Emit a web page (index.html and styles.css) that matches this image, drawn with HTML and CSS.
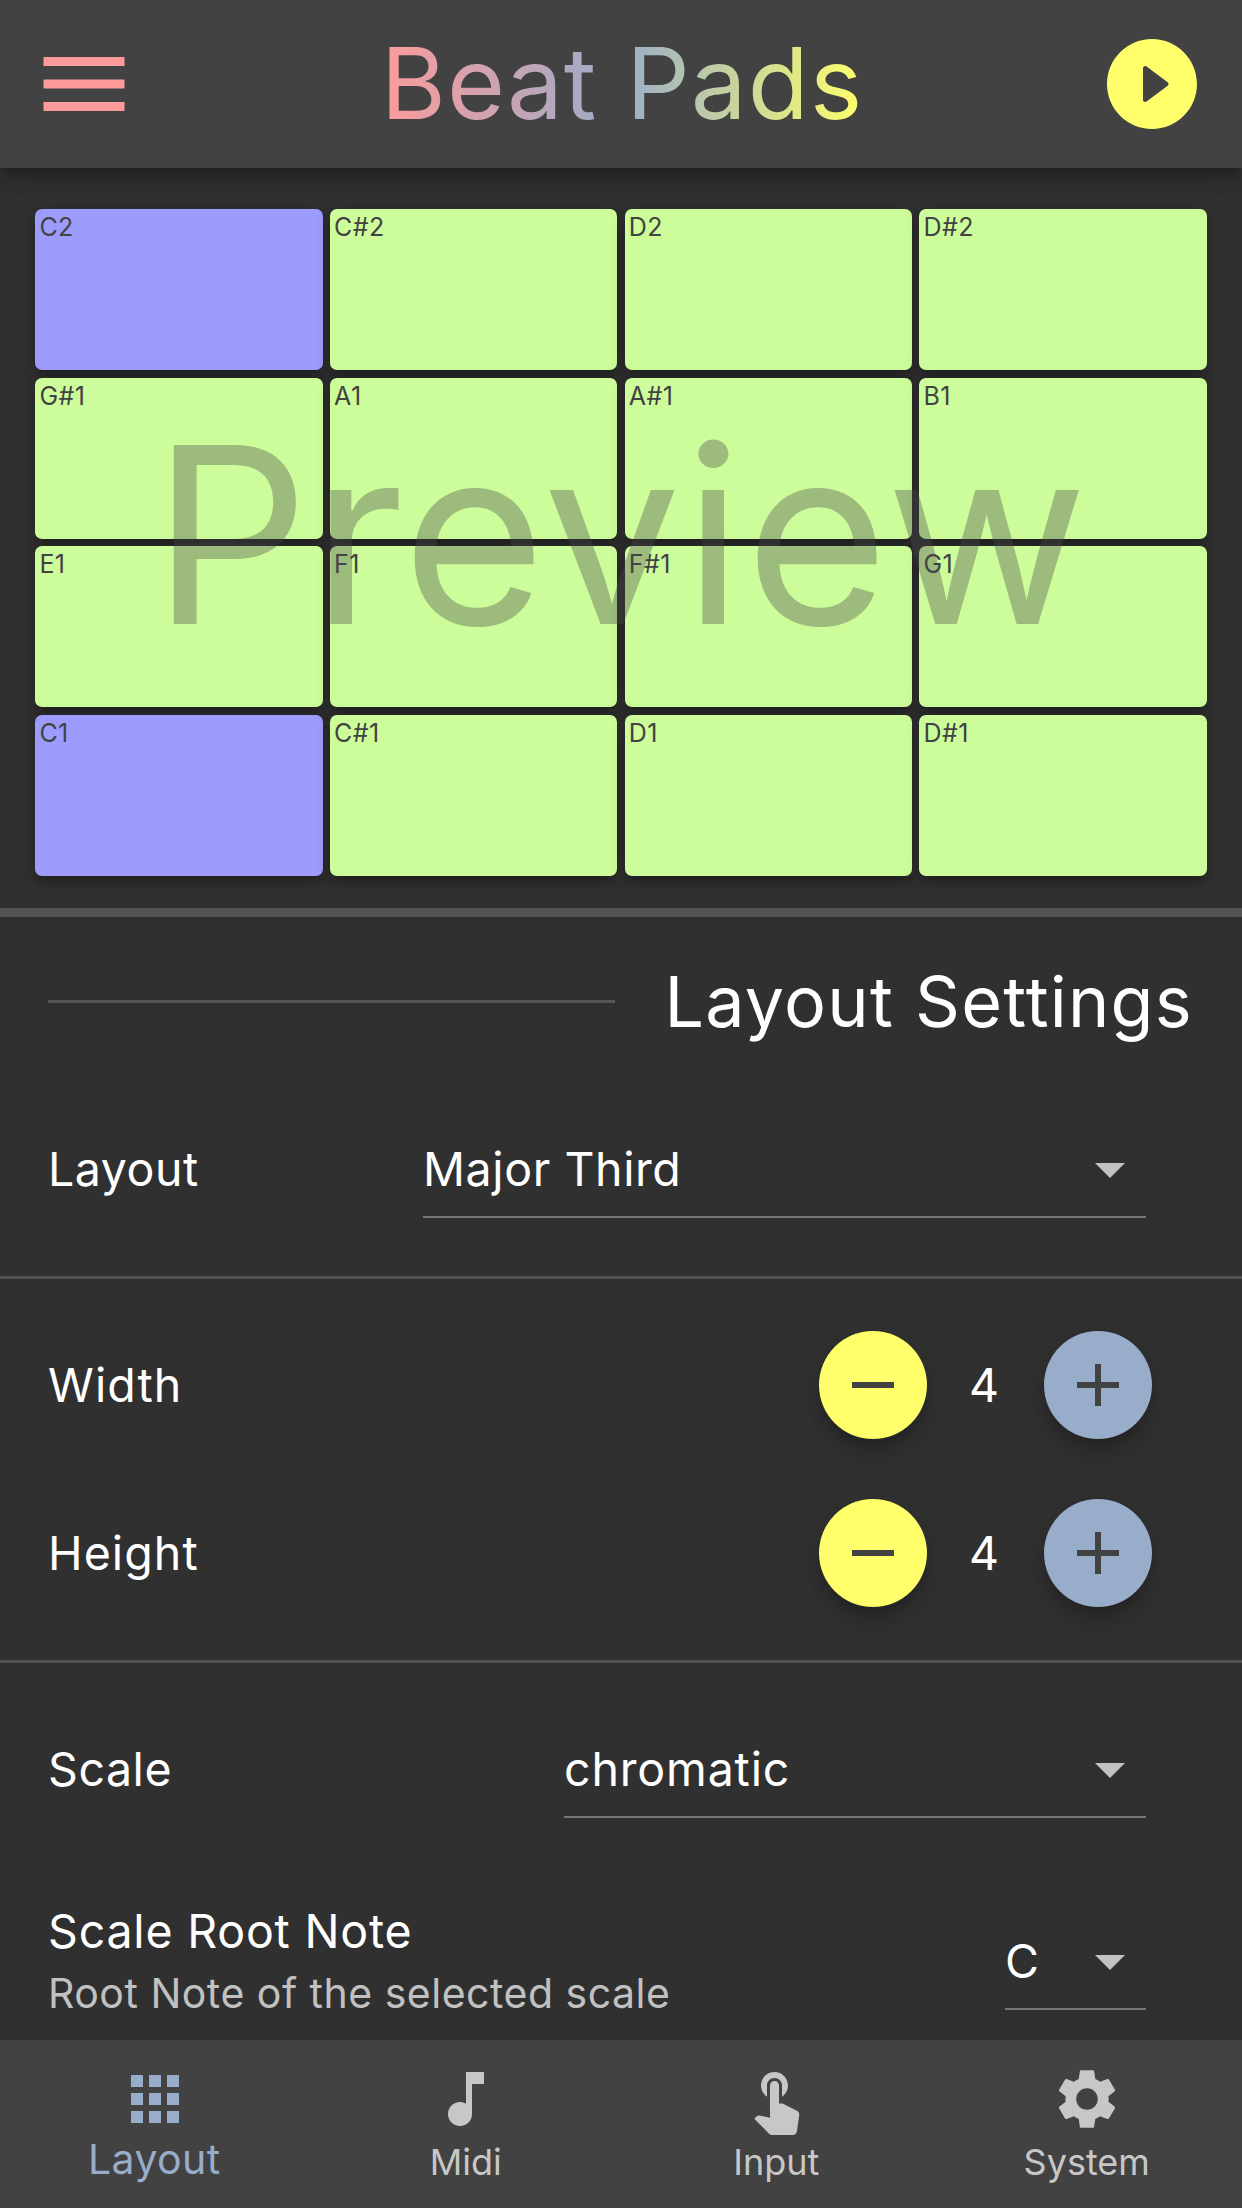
FILE: index.html
```html
<!DOCTYPE html>
<html lang="en">
<head>
<meta charset="utf-8">
<title>Beat Pads</title>
<link rel="stylesheet" href="styles.css">
</head>
<body>
<div class="app">
  <header class="app-bar">
    <svg class="bar-icon menu" viewBox="0 0 24 24"><path d="M3 18h18v-2H3v2zm0-5h18v-2H3v2zm0-7v2h18V6H3z"/></svg>
    <h1 class="title">Beat Pads</h1>
    <svg class="bar-icon play" viewBox="0 0 24 24"><path d="M12 2C6.48 2 2 6.48 2 12s4.48 10 10 10 10-4.48 10-10S17.52 2 12 2zm-2 13.5v-7c0-.41.47-.65.8-.4l4.67 3.5c.27.2.27.6 0 .8l-4.67 3.5c-.33.25-.8.01-.8-.4z"/></svg>
  </header>

  <section class="preview">
    <div class="pads">
      <div class="pad root">C2</div><div class="pad">C#2</div><div class="pad">D2</div><div class="pad">D#2</div>
      <div class="pad">G#1</div><div class="pad">A1</div><div class="pad">A#1</div><div class="pad">B1</div>
      <div class="pad">E1</div><div class="pad">F1</div><div class="pad">F#1</div><div class="pad">G1</div>
      <div class="pad root">C1</div><div class="pad">C#1</div><div class="pad">D1</div><div class="pad">D#1</div>
    </div>
    <div class="watermark">Preview</div>
  </section>

  <main class="settings">
    <div class="heading">
      <span class="heading-line"></span>
      <h2 class="heading-text">Layout Settings</h2>
    </div>

    <div class="row">
      <span class="label label-layout">Layout</span>
      <div class="dropdown wide">
        <span class="value">Major Third</span>
        <svg class="arrow" viewBox="0 0 24 24"><path d="M7 10l5 5 5-5z"/></svg>
      </div>
    </div>
    <hr class="divider">

    <div class="row">
      <span class="label label-size">Width</span>
      <div class="stepper">
        <span class="round minus"><svg viewBox="0 0 24 24"><path d="M19 13H5v-2h14v2z"/></svg></span>
        <span class="count">4</span>
        <span class="round plus"><svg viewBox="0 0 24 24"><path d="M19 13h-6v6h-2v-6H5v-2h6V5h2v6h6v2z"/></svg></span>
      </div>
    </div>
    <div class="row">
      <span class="label label-size">Height</span>
      <div class="stepper">
        <span class="round minus"><svg viewBox="0 0 24 24"><path d="M19 13H5v-2h14v2z"/></svg></span>
        <span class="count">4</span>
        <span class="round plus"><svg viewBox="0 0 24 24"><path d="M19 13h-6v6h-2v-6H5v-2h6V5h2v6h6v2z"/></svg></span>
      </div>
    </div>
    <hr class="divider">

    <div class="row">
      <span class="label label-layout">Scale</span>
      <div class="dropdown medium">
        <span class="value value-scale">chromatic</span>
        <svg class="arrow" viewBox="0 0 24 24"><path d="M7 10l5 5 5-5z"/></svg>
      </div>
    </div>
    <div class="row tall">
      <div class="two-line">
        <div class="label">Scale Root Note</div>
        <div class="sub">Root Note of the selected scale</div>
      </div>
      <div class="dropdown narrow">
        <span class="value">C</span>
        <svg class="arrow" viewBox="0 0 24 24"><path d="M7 10l5 5 5-5z"/></svg>
      </div>
    </div>
  </main>

  <nav class="nav">
    <div class="tab active">
      <svg viewBox="0 0 24 24"><path d="M4 8h4V4H4v4zm6 12h4v-4h-4v4zm-6 0h4v-4H4v4zm0-6h4v-4H4v4zm6 0h4v-4h-4v4zm6-10v4h4V4h-4zm-6 4h4V4h-4v4zm6 6h4v-4h-4v4zm0 6h4v-4h-4v4z"/></svg>
      <span>Layout</span>
    </div>
    <div class="tab">
      <svg viewBox="0 0 24 24"><path d="M12 3v10.55c-.59-.34-1.27-.55-2-.55-2.21 0-4 1.79-4 4s1.79 4 4 4 4-1.79 4-4V7h4V3h-6z"/></svg>
      <span>Midi</span>
    </div>
    <div class="tab">
      <svg viewBox="0 0 24 24"><path d="M9 11.24V7.5C9 6.12 10.12 5 11.5 5S14 6.12 14 7.5v3.74c1.21-.81 2-2.18 2-3.74C16 5.01 13.99 3 11.5 3S7 5.01 7 7.5c0 1.56.79 2.93 2 3.74zm9.84 4.63l-4.54-2.26c-.17-.07-.35-.11-.54-.11H13v-6c0-.83-.67-1.5-1.5-1.5S10 6.67 10 7.5v10.74l-3.43-.72c-.08-.01-.15-.03-.24-.03-.31 0-.59.13-.79.33l-.79.8 4.94 4.94c.27.27.65.44 1.06.44h6.79c.75 0 1.33-.55 1.44-1.28l.75-5.27c.01-.07.02-.14.02-.2 0-.62-.38-1.16-.91-1.38z"/></svg>
      <span>Input</span>
    </div>
    <div class="tab">
      <svg viewBox="0 0 24 24"><path d="M19.14 12.94c.04-.3.06-.61.06-.94 0-.32-.02-.64-.07-.94l2.03-1.58c.18-.14.23-.41.12-.61l-1.92-3.32c-.12-.22-.37-.29-.59-.22l-2.39.96c-.5-.38-1.03-.7-1.62-.94l-.36-2.54c-.04-.24-.24-.41-.48-.41h-3.84c-.24 0-.43.17-.47.41l-.36 2.54c-.59.24-1.13.57-1.62.94l-2.39-.96c-.22-.08-.47 0-.59.22L2.74 8.87c-.12.21-.08.47.12.61l2.03 1.58c-.05.3-.09.63-.09.94s.02.64.07.94l-2.03 1.58c-.18.14-.23.41-.12.61l1.92 3.32c.12.22.37.29.59.22l2.39-.96c.5.38 1.03.7 1.62.94l.36 2.54c.05.24.24.41.48.41h3.84c.24 0 .44-.17.47-.41l.36-2.54c.59-.24 1.13-.56 1.62-.94l2.39.96c.22.08.47 0 .59-.22l1.92-3.32c.12-.22.07-.47-.12-.61l-2.01-1.58zM12 15.6c-1.98 0-3.6-1.62-3.6-3.6s1.62-3.6 3.6-3.6 3.6 1.62 3.6 3.6-1.62 3.6-3.6 3.6z"/></svg>
      <span>System</span>
    </div>
  </nav>
</div>
</body>
</html>
```
FILE: styles.css
```css
* { box-sizing: border-box; }

body {
  margin: 0;
  background: #303030;
  color: #fff;
  font-family: Inter, "Liberation Sans", sans-serif;
}

.app {
  width: 1242px;
  height: 2208px;
  display: flex;
  flex-direction: column;
  overflow: hidden;
}

/* App bar */
.app-bar {
  flex: none;
  height: 168px;
  padding: 0 36px 0 30px;
  display: flex;
  align-items: center;
  justify-content: space-between;
  background: #424242;
  box-shadow: 0 6px 12px -3px rgba(0, 0, 0, .2), 0 12px 15px rgba(0, 0, 0, .14), 0 3px 30px rgba(0, 0, 0, .08);
}
.bar-icon { width: 108px; height: 108px; }
.menu { fill: #fd9b9b; }
.play { fill: #feff6b; }
.title {
  margin: 0 0 2px 8px;
  font-size: 99.5px;
  font-weight: 400;
  line-height: 130px;
  letter-spacing: 1px;
  background: linear-gradient(90deg, #fd9b9b, #98adc9, #feff6b);
  -webkit-background-clip: text;
  background-clip: text;
  color: transparent;
}

/* Pad preview */
.preview {
  flex: none;
  position: relative;
  height: 749px;
  padding: 41px 35.2px 32px;
  border-bottom: 9px solid #545454;
}
.pads {
  height: 667px;
  display: grid;
  grid-template-columns: repeat(4, 1fr);
  grid-template-rows: repeat(4, 1fr);
  gap: 7.3px;
}
.pad {
  padding: 3px 0 0 4.2px;
  border-radius: 7px;
  background: #cdfd9b;
  color: #424242;
  font-size: 25px;
  line-height: 30px;
  letter-spacing: .4px;
  box-shadow: 0 9px 9px -6px rgba(0, 0, 0, .2), 0 6px 12px rgba(0, 0, 0, .14), 0 3px 18px rgba(0, 0, 0, .12);
}
.pad.root { background: #9d9cfc; }
.watermark {
  position: absolute;
  inset: 0 0 7px;
  display: flex;
  align-items: center;
  justify-content: center;
  color: rgba(72, 72, 72, .37);
  font-size: 245.5px;
  line-height: 1;
  letter-spacing: 2.4px;
}

/* Settings list */
.settings { flex: 1; min-height: 0; overflow: hidden; }
.heading {
  height: 168px;
  padding: 0 49px 0 48px;
  display: flex;
  align-items: center;
  gap: 49px;
}
.heading-line { flex: 1; height: 3px; background: #545454; }
.heading-text {
  margin: 0;
  font-size: 70px;
  font-weight: 400;
  letter-spacing: 1.25px;
}
.row {
  height: 168px;
  padding: 0 90px 0 48px;
  display: flex;
  align-items: center;
  justify-content: space-between;
}
.row.tall { height: 216px; }
.label, .value, .count { font-size: 46.5px; line-height: 62px; letter-spacing: .8px; }
.value { letter-spacing: .6px; }
.value-scale { letter-spacing: .85px; }
.label-layout { letter-spacing: .55px; }
.label-size { letter-spacing: 1.1px; }
.two-line { padding-top: 2px; }
.sub { color: #c1c1c1; font-size: 41px; line-height: 62px; letter-spacing: .5px; }
.divider { height: 3px; margin: 23px 0 22px; border: 0; background: #505050; }

.dropdown {
  height: 98px;
  margin-right: 6px;
  padding-top: 2px;
  border-bottom: 2px solid #777;
  display: flex;
  align-items: center;
  justify-content: space-between;
}
.wide { width: 723px; }
.medium { width: 582px; }
.narrow { width: 141px; }
.arrow { width: 72px; height: 72px; fill: #c1c1c1; }

.stepper { display: flex; align-items: center; }
.round {
  width: 108px;
  height: 108px;
  border-radius: 50%;
  display: grid;
  place-items: center;
  box-shadow: 0 9px 15px -3px rgba(0, 0, 0, .2), 0 16px 26px rgba(0, 0, 0, .12);
}
.round svg { width: 72px; height: 72px; fill: #424242; }
.minus { background: #feff6b; }
.plus { background: #98adc9; }
.count { width: 117px; padding-right: 2px; text-align: center; }

/* Bottom navigation */
.nav {
  flex: none;
  position: relative;
  height: 168px;
  display: grid;
  grid-template-columns: repeat(4, 1fr);
  background: #424242;
  box-shadow: 0 0 12px rgba(0, 0, 0, .08);
}
.tab {
  padding-top: 23px;
  display: flex;
  flex-direction: column;
  align-items: center;
  color: #c7c7c7;
  font-size: 36px;
  line-height: 54px;
}
.tab svg { width: 72px; height: 72px; fill: currentColor; }
.tab.active { color: #98adc9; font-size: 41px; line-height: 48px; letter-spacing: .4px; }
.tab.active span { margin-right: 2px; }
```
